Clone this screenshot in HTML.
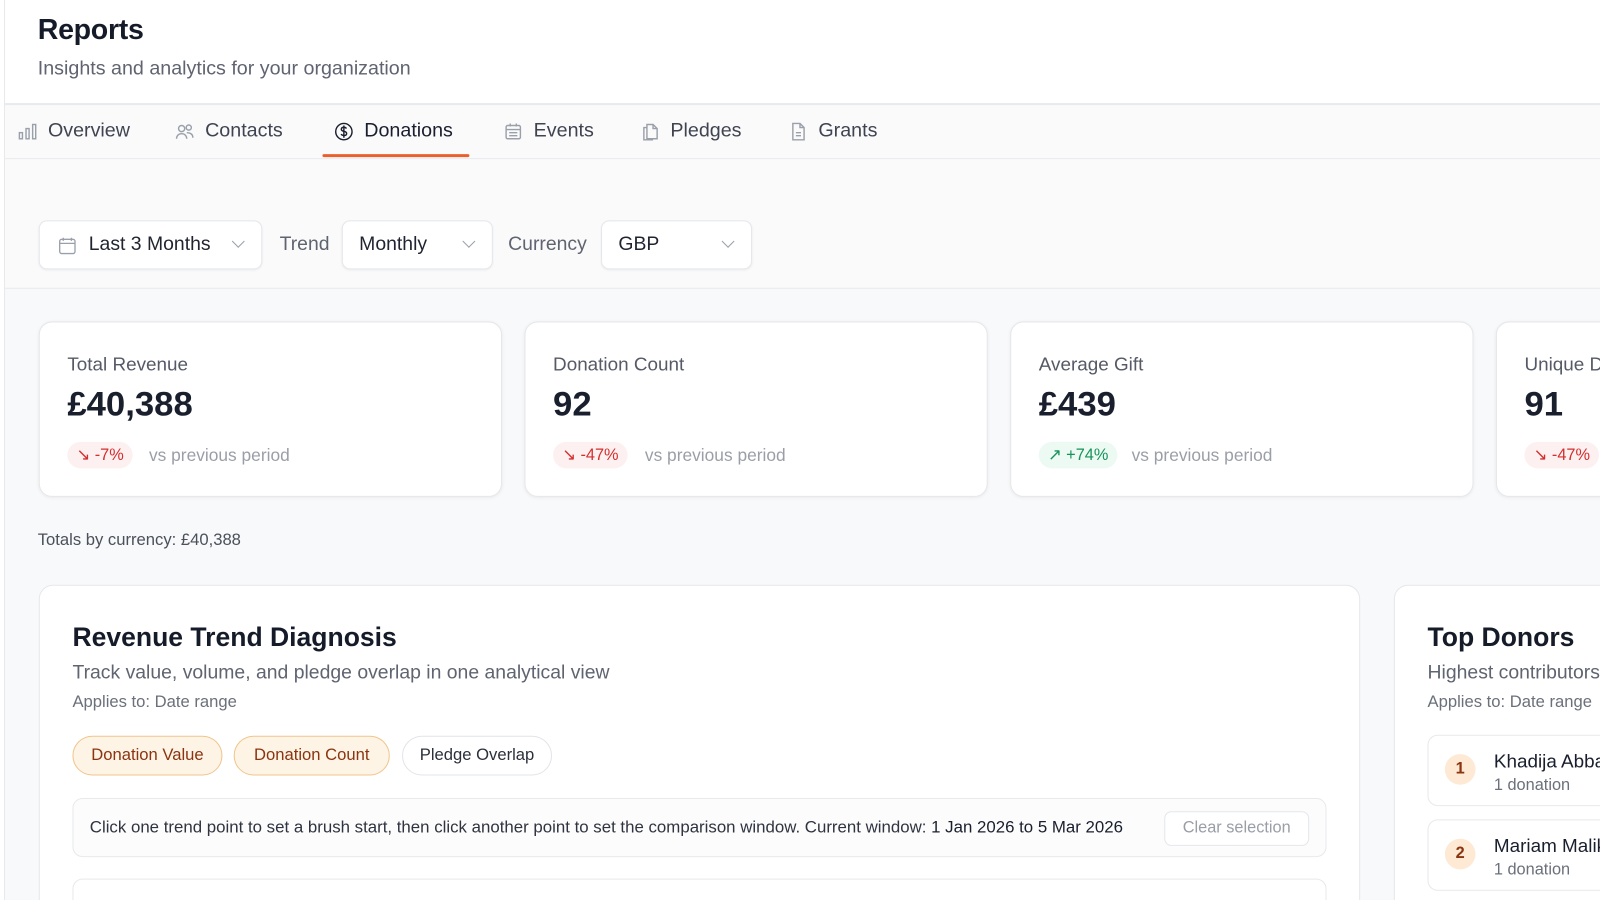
<!DOCTYPE html>
<html><head><meta charset="utf-8"><style>
*{box-sizing:border-box;margin:0;padding:0}
html{width:1600px;height:900px;overflow:hidden}
body{width:1600px;height:900px;overflow:hidden;background:#f8f9fa;font-family:"Liberation Sans",sans-serif;color:#1a1f2e;position:relative}
#w{position:absolute;left:0;top:0;width:1568px;height:882px;overflow:hidden;transform:scale(1.0204);transform-origin:0 0}
.side{position:absolute;left:0;top:0;width:5px;height:900px;background:#fff;border-right:1px solid #e5e7eb}
.hdr{position:absolute;left:5px;top:0;width:1595px;height:103px;background:#fff;border-bottom:2px solid #e9eaec}
.hdr h1{position:absolute;left:32px;top:13px;font-size:28px;font-weight:700;color:#151b28;letter-spacing:-.3px}
.hdr p{position:absolute;left:32px;top:57px;font-size:19.3px;color:#5f6470}
.tabs{position:absolute;left:5px;top:104px;width:1595px;height:52px;background:#fafafb;border-bottom:1px solid #e8e9eb}
.tab{position:absolute;top:14px;font-size:19.3px;color:#3f4450;display:flex;align-items:center;gap:10px}
.tab svg{width:20px;height:20px;stroke:#9aa0aa;fill:none;stroke-width:1.4}
.ul{position:absolute;left:311px;top:47px;width:144px;height:3px;background:#e8612c;border-radius:2px}
.fbar{position:absolute;left:5px;top:156px;width:1595px;height:127px;background:#fafafb;border-bottom:1px solid #e8e9eb}
.sel{position:absolute;top:216px;height:48px;background:#fff;border:1px solid #e5e7eb;border-radius:8px;box-shadow:0 1px 2px rgba(0,0,0,.05);font-size:19px;color:#1f2430;display:flex;align-items:center}
.chev{position:absolute;right:18px;top:17px;width:9px;height:9px;border-right:1.5px solid #9aa0aa;border-bottom:1.5px solid #9aa0aa;transform:rotate(45deg)}
.lbl{position:absolute;top:229px;font-size:19px;color:#5f6470}
.card{position:absolute;top:315px;width:454px;height:172px;background:#fff;border:1px solid #e6e7ea;border-radius:13px;box-shadow:0 1px 3px rgba(0,0,0,.06)}
.card .t{position:absolute;left:27px;top:30px;font-size:18.5px;color:#555a66}
.card .v{position:absolute;left:27px;top:61px;font-size:34px;font-weight:700;color:#1a1f2e}
.badge{position:absolute;left:27px;top:117px;height:26px;padding:0 9px;border-radius:13px;font-size:16px;display:flex;align-items:center;gap:4px}
.dn{background:#fdf0f0;color:#d32f2f}.up{background:#ecfaf3;color:#17935a}
.vs{position:absolute;top:121px;font-size:17px;color:#9a9ea7}
.big{position:absolute;top:573px;height:400px;background:#fff;border:1px solid #e6e7ea;border-radius:14px}
.big h2{position:absolute;left:32px;top:35px;font-size:26px;font-weight:700;color:#151b28}
.big .s{position:absolute;left:32px;top:75px;font-size:19px;color:#5f6470;white-space:nowrap}
.big .a{position:absolute;left:32px;top:105px;font-size:16.3px;color:#6b707a;white-space:nowrap}
.chip{position:absolute;top:147px;height:39px;border-radius:20px;font-size:16.3px;display:flex;align-items:center;justify-content:center}
.on{background:#fef4e6;border:1px solid #efc58d;color:#8a3410}
.off{background:#fff;border:1px solid #e2e4e8;color:#2b303b}
.row{position:absolute;height:58px;border:1px solid #e8e9eb;border-radius:10px;background:#fcfcfc}
.num{position:absolute;left:16px;top:17px;width:30px;height:30px;border-radius:15px;background:#fde9d4;color:#8a3410;font-size:16px;display:flex;align-items:center;justify-content:center;font-weight:700}
</style></head><body><div id="w">
<div class="side"></div>
<div class="hdr"><h1>Reports</h1><p>Insights and analytics for your organization</p></div>
<div class="tabs">
 <div class="tab" style="left:12px"><svg viewBox="0 0 20 20"><rect x="2" y="11" width="3" height="6"/><rect x="8.5" y="7" width="3" height="10"/><rect x="15" y="3" width="3" height="14"/></svg>Overview</div>
 <div class="tab" style="left:166px"><svg viewBox="0 0 20 20"><circle cx="7" cy="7" r="3"/><circle cx="14" cy="6" r="2.5"/><path d="M2 17c0-3 2-5 5-5s5 2 5 5M12 11c3 0 6 1 6 5"/></svg>Contacts</div>
 <div class="tab" style="left:322px;color:#1a1f2e"><svg viewBox="0 0 20 20" style="stroke:#1a1f2e"><circle cx="10" cy="10" r="8"/><path d="M12.5 7c-.5-1-1.5-1.3-2.5-1.3-1.5 0-2.5.8-2.5 2s1 1.7 2.5 2 2.7.8 2.7 2.1-1.2 2-2.7 2c-1.2 0-2.2-.5-2.7-1.4M10 4v12"/></svg>Donations</div>
 <div class="tab" style="left:488px"><svg viewBox="0 0 20 20"><rect x="3" y="4" width="14" height="13" rx="1.5"/><path d="M3 8h14M7 2v3M13 2v3M6 11h8M6 14h8"/></svg>Events</div>
 <div class="tab" style="left:622px"><svg viewBox="0 0 20 20"><path d="M7 3h6l4 4v10H7z"/><path d="M13 3v4h4M7 6H4v12h9"/></svg>Pledges</div>
 <div class="tab" style="left:767px"><svg viewBox="0 0 20 20"><path d="M5 2h7l4 4v12H5z"/><path d="M12 2v4h4M8 11h5M8 14h5"/></svg>Grants</div>
 <div class="ul"></div>
</div>
<div class="fbar"></div>
<div class="sel" style="left:38px;width:219px;padding-left:48px">Last 3 Months<svg style="position:absolute;left:18px;top:15px" width="18" height="18" viewBox="0 0 18 18" fill="none" stroke="#9aa0aa" stroke-width="1.3"><rect x="1.5" y="2.5" width="15" height="14" rx="2"/><path d="M1.5 6.5h15M5 1v3M13 1v3"/></svg><div class="chev" style="top:15px"></div></div>
<div class="lbl" style="left:274px">Trend</div>
<div class="sel" style="left:335px;width:148px;padding-left:16px">Monthly<div class="chev" style="top:15px"></div></div>
<div class="lbl" style="left:498px">Currency</div>
<div class="sel" style="left:589px;width:148px;padding-left:16px">GBP<div class="chev" style="top:15px"></div></div>

<div class="card" style="left:38px"><div class="t">Total Revenue</div><div class="v">£40,388</div><div class="badge dn">↘ -7%</div><div class="vs" style="left:107px">vs previous period</div></div>
<div class="card" style="left:514px"><div class="t">Donation Count</div><div class="v">92</div><div class="badge dn">↘ -47%</div><div class="vs" style="left:117px">vs previous period</div></div>
<div class="card" style="left:990px"><div class="t">Average Gift</div><div class="v">£439</div><div class="badge up">↗ +74%</div><div class="vs" style="left:118px">vs previous period</div></div>
<div class="card" style="left:1466px"><div class="t">Unique Donors</div><div class="v">91</div><div class="badge dn">↘ -47%</div></div>

<div style="position:absolute;left:37px;top:520px;font-size:16.3px;color:#4b505b">Totals by currency: £40,388</div>

<div class="big" style="left:38px;width:1295px">
 <h2>Revenue Trend Diagnosis</h2>
 <div class="s">Track value, volume, and pledge overlap in one analytical view</div>
 <div class="a">Applies to: Date range</div>
 <div class="chip on" style="left:32px;width:147px">Donation Value</div>
 <div class="chip on" style="left:190px;width:153px">Donation Count</div>
 <div class="chip off" style="left:355px;width:147px">Pledge Overlap</div>
 <div class="row" style="left:32px;top:208px;width:1229px;background:#fcfcfc">
  <div style="position:absolute;left:16px;top:19px;font-size:16.5px;color:#2f3440;white-space:nowrap">Click one trend point to set a brush start, then click another point to set the comparison window. Current window: <span style="color:#1a1f2e">1 Jan 2026 to 5 Mar 2026</span></div>
  <div style="position:absolute;right:16px;top:12px;height:34px;width:142px;border:1px solid #e5e7eb;border-radius:7px;background:#fff;font-size:16px;color:#9a9ea7;display:flex;align-items:center;justify-content:center">Clear selection</div>
 </div>
 <div class="row" style="left:32px;top:287px;width:1229px;background:#fff"></div>
</div>
<div class="big" style="left:1366px;width:260px">
 <h2>Top Donors</h2>
 <div class="s">Highest contributors</div>
 <div class="a">Applies to: Date range</div>
 <div class="row" style="left:32px;top:146px;width:260px;height:70px;background:#fff"><div class="num" style="top:18px">1</div><div style="position:absolute;left:64px;top:14px;font-size:18.5px;white-space:nowrap">Khadija Abbas</div><div style="position:absolute;left:64px;top:40px;font-size:16px;color:#6b707a">1 donation</div></div>
 <div class="row" style="left:32px;top:229px;width:260px;height:70px;background:#fff"><div class="num" style="top:18px">2</div><div style="position:absolute;left:64px;top:14px;font-size:18.5px;white-space:nowrap">Mariam Malik</div><div style="position:absolute;left:64px;top:40px;font-size:16px;color:#6b707a">1 donation</div></div>
</div>
</div></body></html>
